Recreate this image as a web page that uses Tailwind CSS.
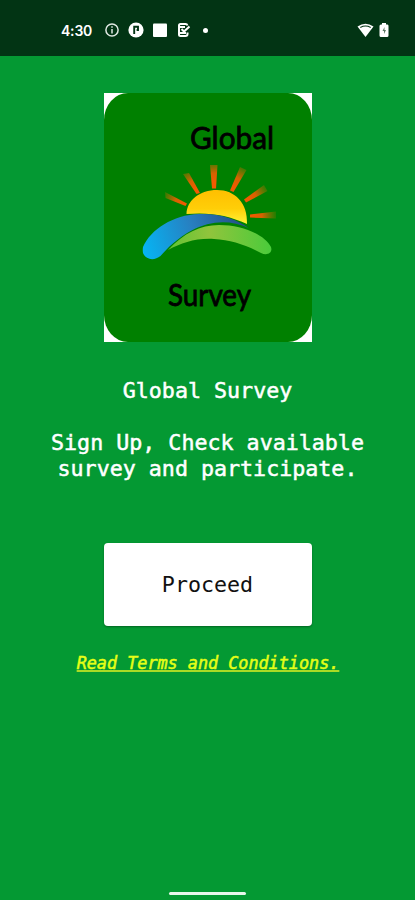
<!DOCTYPE html>
<html lang="en">
<head>
<meta charset="utf-8">
<meta name="viewport" content="width=device-width, initial-scale=1">
<title>Global Survey</title>
<script src="https://cdn.jsdelivr.net/npm/@tailwindcss/browser@4"></script>
</head>
<body class="bg-[#049933]">
<div class="flex h-[900px] w-[415px] flex-col items-center overflow-hidden bg-[#049933] font-['DejaVu_Sans_Mono',monospace]">
  <header class="flex h-14 w-full shrink-0 items-center bg-[#023414] pt-1 pr-[26px] pl-[61px] text-white">
    <span class="w-[43px] font-['Inter',sans-serif] text-[14px] font-semibold tracking-[-0.2px]">4:30</span>
    <div class="flex items-center gap-2">
      <svg class="size-4" viewBox="0 0 16 16" fill="none" stroke="#dfe8e2" stroke-width="1.5"><circle cx="8" cy="8" r="6.1"/><path d="M8 7v4.500M8 4.300v1.500"/></svg>
      <svg class="size-4" viewBox="0 0 16 16"><circle cx="8" cy="8" r="7.600" fill="#fff"/><path d="M6.200 12V4.800H10v3.200H8.600" fill="none" stroke="#023414" stroke-width="1.900"/></svg>
      <svg class="size-4" viewBox="0 0 16 16"><rect x="1" y="1.500" width="14" height="13.500" rx="1" fill="#fff"/></svg>
      <svg class="size-4" viewBox="0 0 16 16" fill="none" stroke="#fff" stroke-width="2"><path d="M11.500 3.500Q11 2 9.500 2H4.500Q3 2 3 3.500v9Q3 14 4.500 14h5q2 0 2-2v-1.500M5.500 7l2.500 2.500L13.500 4.500M4 11h6M4 5h5"/></svg>
    </div>
    <span class="ml-[11px] size-[5px] rounded-full bg-white"></span>
    <div class="ml-auto flex items-center gap-[5px]">
      <svg class="h-4 w-[17px]" viewBox="0 0 17 16"><path d="M.5 4.500Q8.500-1 16.500 4.500L8.500 15Z" fill="#fff"/><path d="M3.300 5.400q5.200-2.700 10.400 0" fill="none" stroke="#023414" stroke-width="1.100"/></svg>
      <svg class="h-4 w-[10px]" viewBox="0 0 10 16"><path d="M3 1h4v1.500h1.500Q9.500 2.500 9.500 4v9.500Q9.500 15 8 15H2Q.5 15 .5 13.500V4Q.5 2.500 2 2.500h1Z" fill="#fff"/><path d="M5.500 5L3.500 9H5v3l2-4H5.500Z" fill="#5c7864"/></svg>
    </div>
  </header>
  <main class="flex w-full flex-col items-center pt-[37px]">
    <svg class="h-[249px] w-[208px]" viewBox="104 93 208 249">
      <defs>
        <linearGradient id="sun" x2="0" y2="1"><stop stop-color="#ffbf00"/><stop offset=".55" stop-color="#ffce08"/><stop offset="1" stop-color="#fff338"/></linearGradient>
        <linearGradient id="blue" gradientUnits="userSpaceOnUse" x1="144" y1="255" x2="248" y2="223"><stop stop-color="#05b5f4"/><stop offset=".5" stop-color="#287fc0"/><stop offset="1" stop-color="#254b80"/></linearGradient>
        <linearGradient id="leaf"><stop stop-color="#60c334"/><stop offset=".4" stop-color="#91c43c"/><stop offset="1" stop-color="#4acb3b"/></linearGradient>
        <radialGradient id="ray" gradientUnits="userSpaceOnUse" cx="217" cy="218" r="60"><stop offset=".6" stop-color="#f25a00"/><stop offset=".75" stop-color="#d66200"/><stop offset="1" stop-color="#a57500" stop-opacity=".15"/></radialGradient>
      </defs>
      <path fill="#fff" d="M104 93h208v249H104z"/>
      <rect x="104" y="93" width="208" height="249" rx="24" ry="27" fill="#008000"/>
      <g font-family="Lato, sans-serif" font-weight="400" fill="#000" stroke="#000" stroke-width=".8">
        <text x="190" y="149" font-size="31" textLength="84" lengthAdjust="spacingAndGlyphs">Global</text>
        <text x="168" y="306" font-size="31" textLength="83" lengthAdjust="spacingAndGlyphs">Survey</text>
      </g>
      <g fill="url(#ray)">
        <path d="M165 192l22 11.500-1.500 2.500-20-8z"/>
        <path d="M183 174l6-1 11 20-3.500 1z"/>
        <path d="M210 165h7.500l-1.500 23.500h-4z"/>
        <path d="M240 167l6.500 3-13 22-3.500-1.500z"/>
        <path d="M264 185l3.500 6-21.500 11.500-2-3z"/>
        <path d="M276 211.500v7l-26-1v-3z"/>
      </g>
      <path d="M186.500 214C187 200 200 190 217 190c18 0 31 13 30 34-19-9-38-12-60.500-10Z" fill="url(#sun)"/>
      <path d="M143 247c8-18 30-32 56-33 20-1 38 5 49.500 14-19-9-39-7-56 2-15 8-25 18-32 26-6 5-15 4-17.500-3q-.5-3 0-6Z" fill="url(#blue)"/>
      <path d="M168 250c16-17 32-25 51-25 24 0 46 10 52 22 2 6-4 9-10 6-15-8-30-13-47-14-19-1-32 4-46 11Z" fill="url(#leaf)"/>
    </svg>
    <h1 class="mt-[36px] text-[21.67px] leading-[26px] whitespace-nowrap text-white [-webkit-text-stroke:0.5px_white]">Global Survey</h1>
    <p class="mt-[26px] text-center text-[21.67px] leading-[26px] whitespace-nowrap text-white [-webkit-text-stroke:0.5px_white]">Sign Up, Check available<br>survey and participate.</p>
    <button class="mt-[61px] h-[83px] w-[208px] rounded-[4px] bg-white pt-px text-[21.67px] text-[#111] shadow-[0_1px_2px_rgba(0,0,0,0.35)]">Proceed</button>
    <a class="mt-[26px] ml-px text-[16.800px] leading-[22px] whitespace-nowrap text-[#e6ff16] italic underline decoration-[#a9db25] decoration-[1.500px] underline-offset-[1px] [text-decoration-skip-ink:none] [-webkit-text-stroke:0.5px_#e6ff16]">Read Terms and Conditions.</a>
  </main>
  <div class="mt-auto mb-[5px] h-[3px] w-[77px] rounded-full bg-[#e7f7eb]"></div>
</div>
</body>
</html>
